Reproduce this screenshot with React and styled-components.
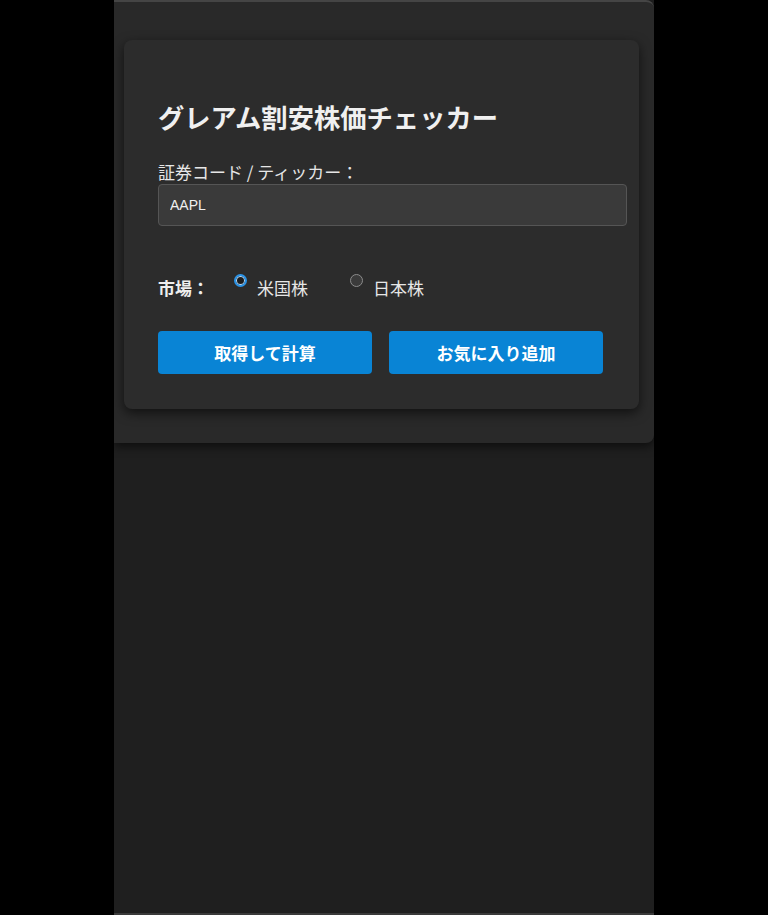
import React, { useState } from "react";
import styled, { createGlobalStyle } from "styled-components";

const GlobalStyle = createGlobalStyle`
  html, body {
    margin: 0;
    padding: 0;
    background: #000;
  }
  body {
    font-family: "Noto Sans CJK JP", "Noto Sans", "Liberation Sans", sans-serif;
    color: #e8e8e8;
  }
`;

const Column = styled.div`
  width: 540px;
  min-height: 913px;
  margin-left: 114px;
  background: #1f1f1f;
  border-bottom: 2px solid #3a3a3a;
`;

const Panel = styled.div`
  background: #292929;
  border-top: 2px solid #454545;
  border-radius: 0 8px 8px 0;
  padding: 38px 15px 34px 10px;
  box-shadow: 0 4px 10px rgba(0, 0, 0, 0.55);
`;

const Card = styled.div`
  background: #2c2c2c;
  border-radius: 8px;
  padding: 34px 34px 35px;
  box-shadow: 0 4px 12px rgba(0, 0, 0, 0.6);
`;

const Title = styled.h2`
  margin: 26px 0 0;
  font-size: 26.3px;
  line-height: 34px;
  font-weight: 700;
  color: #f0f0f0;
`;

const FieldLabel = styled.label`
  display: block;
  margin-top: 26px;
  font-size: 17px;
  line-height: 24px;
  color: #e6e6e6;
`;

const TextInput = styled.input`
  display: block;
  width: 100%;
  box-sizing: content-box;
  margin: 0;
  padding: 10px 9px 10px 11px;
  height: 20px;
  font-size: 14px;
  font-family: "Liberation Sans", "Noto Sans CJK JP", sans-serif;
  color: #f0f0f0;
  background: #3a3a3a;
  border: 1px solid #555;
  border-radius: 4px;
  outline: none;
`;

const MarketRow = styled.div`
  display: flex;
  align-items: flex-start;
  margin-top: 50px;
  height: 24px;
  font-size: 17px;
  line-height: 24px;
`;

const MarketLabel = styled.span`
  font-weight: 700;
  color: #eee;
  margin-right: 25px;
`;

const Option = styled.label`
  display: flex;
  align-items: flex-start;
  gap: 10px;
  margin-right: 42px;
  cursor: pointer;
  color: #e6e6e6;
`;

const RadioDot = styled.span`
  box-sizing: border-box;
  width: 13px;
  height: 13px;
  margin-top: -2px;
  border-radius: 50%;
  background: ${(p) => (p.$checked ? "#1d1d1d" : "#3b3b3b")};
  border: ${(p) => (p.$checked ? "2.5px solid #2b93e6" : "1.5px solid #8c8c8c")};
  box-shadow: ${(p) => (p.$checked ? "inset 0 0 0 1px #bcdcf7" : "none")};
`;

const ButtonRow = styled.div`
  display: flex;
  gap: 17px;
  margin-top: 31px;
  padding-right: 2px;
`;

const Button = styled.button`
  flex: 1;
  height: 43px;
  border: none;
  border-radius: 4px;
  background: #0984d5;
  color: #fff;
  font-family: "Noto Sans CJK JP", "Noto Sans", sans-serif;
  font-size: 17px;
  font-weight: 700;
  cursor: pointer;
`;

const markets = [
  { key: "us", label: "米国株" },
  { key: "jp", label: "日本株" },
];

const App = () => {
  const [ticker, setTicker] = useState("AAPL");
  const [market, setMarket] = useState("us");

  return (
    <>
      <GlobalStyle />
      <Column>
        <Panel>
          <Card>
            <Title>グレアム割安株価チェッカー</Title>
            <FieldLabel htmlFor="ticker">証券コード / ティッカー：</FieldLabel>
            <TextInput
              id="ticker"
              value={ticker}
              onChange={(e) => setTicker(e.target.value)}
            />
            <MarketRow>
              <MarketLabel>市場：</MarketLabel>
              {markets.map((m) => (
                <Option key={m.key} onClick={() => setMarket(m.key)}>
                  <RadioDot $checked={market === m.key} />
                  {m.label}
                </Option>
              ))}
            </MarketRow>
            <ButtonRow>
              <Button>取得して計算</Button>
              <Button>お気に入り追加</Button>
            </ButtonRow>
          </Card>
        </Panel>
      </Column>
    </>
  );
};

export default App;
